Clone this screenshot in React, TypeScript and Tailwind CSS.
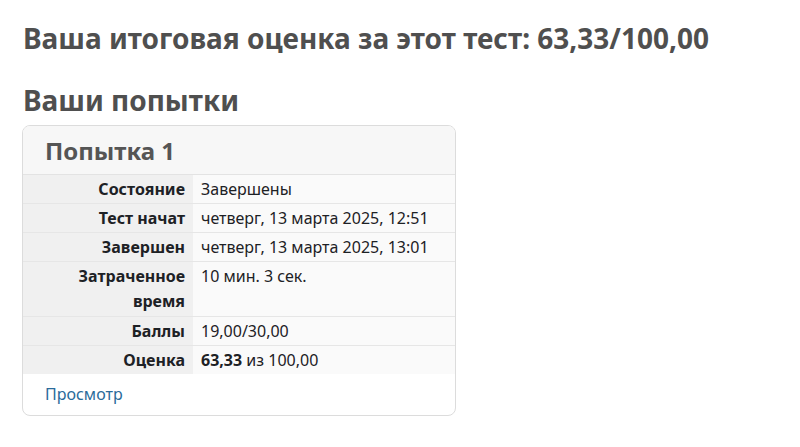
import React from "react";

const rows: { label: string; value: React.ReactNode; tall?: boolean }[] = [
  { label: "Состояние", value: "Завершены" },
  { label: "Тест начат", value: "четверг, 13 марта 2025, 12:51" },
  { label: "Завершен", value: "четверг, 13 марта 2025, 13:01" },
  { label: "Затраченное время", value: "10 мин. 3 сек.", tall: true },
  { label: "Баллы", value: "19,00/30,00" },
  {
    label: "Оценка",
    value: (
      <>
        <b className="font-bold">63,33</b> из 100,00
      </>
    ),
  },
];

export default function App() {
  return (
    <div
      className="min-h-screen bg-white px-[23px] pt-[20px] text-[#1d2125]"
      style={{ fontFamily: '"Noto Sans", "Open Sans", sans-serif' }}
    >
      <h2 className="text-[28px] font-bold leading-[36px] text-[#4f4f4f]">
        Ваша итоговая оценка за этот тест: 63,33/100,00
      </h2>

      <h3 className="mt-[26px] text-[28px] font-bold leading-[36px] text-[#4f4f4f]">Ваши попытки</h3>

      <div className="mt-[7px] w-[434px] -ml-px overflow-hidden rounded-[8px] border border-[#dcdcdc] bg-white">
        {/* card header */}
        <div className="h-[49px] border-b border-[#e3e3e3] bg-[#f7f7f7] px-[22px] pt-[9px]">
          <h4 className="text-[24px] font-bold leading-[32px] text-[#555]">Попытка 1</h4>
        </div>

        <table className="w-full border-collapse text-[16px]">
          <tbody>
            {rows.map((r, i) => (
              <tr key={i} className={i < rows.length - 1 ? "border-b border-[#e6e6e6]" : ""}>
                <th className="w-[170px] bg-[#f0f0f0] py-[2px] pl-2 pr-[8px] text-right align-top font-bold leading-[24px]">
                  {r.tall ? (
                    <span className="block leading-[25px]">
                      Затраченное
                      <br />
                      время
                    </span>
                  ) : (
                    r.label
                  )}
                </th>
                <td className="bg-[#fafafa] py-[2px] pl-[8px] align-top leading-[24px] text-[#1d2125]">
                  {r.value}
                </td>
              </tr>
            ))}
          </tbody>
        </table>

        <div className="px-[22px] pt-[8px] pb-[9px]">
          <a href="#" className="text-[16px] leading-[24px] text-[#2a6b9a]">
            Просмотр
          </a>
        </div>
      </div>
    </div>
  );
}
